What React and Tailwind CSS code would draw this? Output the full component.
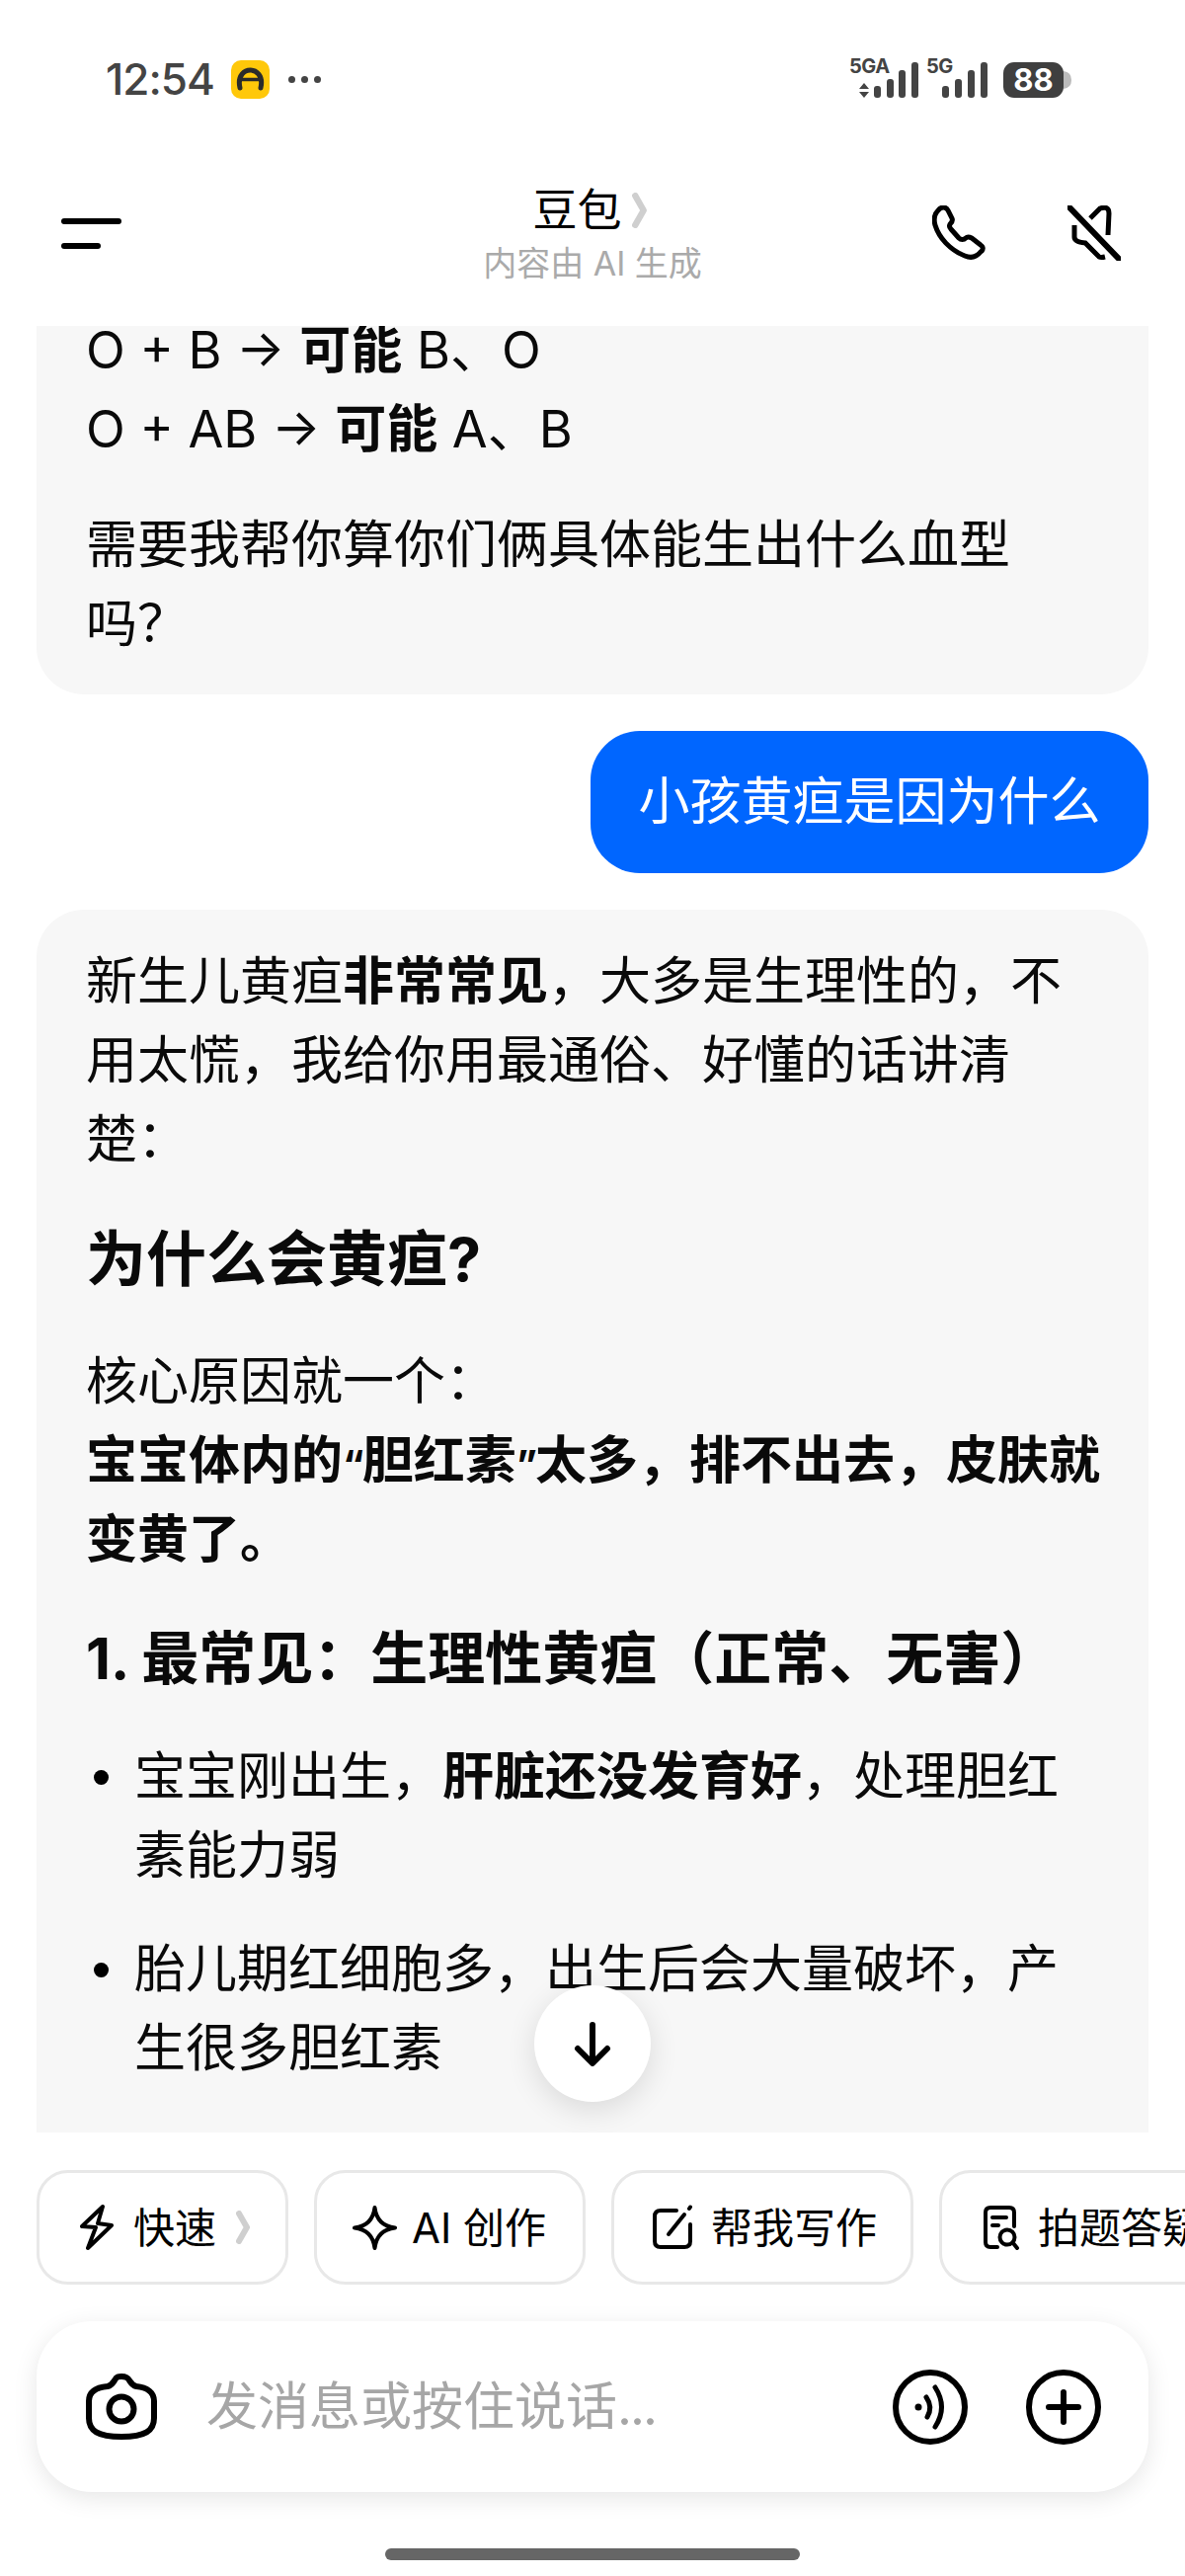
import React from 'react';

const FONT = 'font-["Inter","Noto_Sans_CJK_SC",sans-serif]';

function StatusIcons() {
  const bars = [
    [885, 87], [898, 80], [910, 71], [923, 63],
    [954, 87], [967, 80], [980, 71], [993, 63],
  ];
  return (
    <svg width="240" height="50" viewBox="855 55 240 50" className="mr-[105px]">
      <text x="860" y="74" fontSize="20" fontWeight="700" fill="#444" letterSpacing="-0.5" fontFamily="Inter">5GA</text>
      <text x="938" y="74" fontSize="20" fontWeight="700" fill="#444" letterSpacing="-0.5" fontFamily="Inter">5G</text>
      <path d="M875 84l5 6h-10zM875 99l5-6h-10z" fill="#444" />
      {bars.map(([x, y]) => (
        <rect key={x} x={x} y={y} width="7" height={99 - y} rx="3" fill="#444" />
      ))}
      <path d="M1077 72q8 1 8 9q0 8-8 9z" fill="#bbb" />
      <rect x="1016" y="63" width="61" height="36" rx="11" fill="#3f3f3f" />
      <text x="1046.5" y="92" fontSize="31" fontWeight="700" fill="#fff" textAnchor="middle" fontFamily="Inter">88</text>
    </svg>
  );
}

function AppBadge() {
  return (
    <svg width="39" height="39" viewBox="0 0 39 39">
      <rect width="39" height="39" rx="10" fill="#ffc80a" />
      <path d="M9 28C6 15 14 10 19.5 10C25 10 33 15 30 28" fill="none" stroke="#2b2b2b" strokeWidth="5" strokeLinecap="round" />
      <path d="M8 19.5H31" stroke="#2b2b2b" strokeWidth="3.5" />
    </svg>
  );
}

function Chevron({ w = 14, h = 34 }) {
  return (
    <svg width={w} height={h} viewBox="0 0 14 34" fill="none" stroke="#cfcfcf" strokeWidth="6" strokeLinecap="round" strokeLinejoin="round">
      <path d="M3 3L11 17L3 31" />
    </svg>
  );
}

function PhoneIcon() {
  return (
    <svg width="54" height="56" viewBox="0 0 54 56" fill="none" stroke="#000" strokeWidth="5" strokeLinejoin="round">
      <path d="M6 5C9 1 14 1 16 5L20 13C21 15 20 17 18 19C17 21 18 23 19 24L27 33C29 35 32 35 34 33C36 31 38 32 40 33L49 40C52 42 52 45 49 47C45 52 40 54 33 51C18 45 7 33 3 20C1 13 2 9 6 5Z" />
    </svg>
  );
}

function MuteIcon() {
  return (
    <svg width="54" height="56" viewBox="0 0 54 56" fill="none" stroke="#000" strokeWidth="5" strokeLinecap="round">
      <path d="M2 2L52 54" strokeWidth="6" />
      <path d="M23 13L33 3Q42 0 42 8L41 30" strokeLinecap="butt" />
      <path d="M7 20V32Q7 37 18 38L32 52Q34 53 38 52" strokeLinecap="butt" />
    </svg>
  );
}

function BoltIcon() {
  return (
    <svg width="34" height="46" viewBox="0 0 34 46" fill="none" stroke="#000" strokeWidth="4" strokeLinejoin="round">
      <path d="M23 2L2 22L16 23L8 44L32 21L18 19Z" />
    </svg>
  );
}

function StarIcon() {
  return (
    <svg width="45" height="45" viewBox="0 0 45 45" fill="none" stroke="#000" strokeWidth="4" strokeLinejoin="round">
      <path d="M22.5 2C24 14 30 21 43 22.5C30 24 24 31 22.5 43C21 31 15 24 2 22.5C15 21 21 14 22.5 2Z" />
    </svg>
  );
}

function PenIcon() {
  return (
    <svg width="44" height="46" viewBox="0 0 44 46" fill="none" stroke="#000" strokeWidth="4" strokeLinecap="round">
      <path d="M25 6H9Q3 6 3 12V37Q3 43 9 43H33Q39 43 39 37V20" />
      <path d="M17 30L33 10" />
      <path d="M38 4L39 2.5" />
    </svg>
  );
}

function DocSearchIcon() {
  return (
    <svg width="38" height="46" viewBox="0 0 38 46" fill="none" stroke="#000" strokeWidth="4" strokeLinecap="round">
      <path d="M32 22V8Q32 3 27 3H8Q3 3 3 8V38Q3 43 8 43H15" />
      <path d="M10 13H24" />
      <path d="M10 21H16" />
      <circle cx="25" cy="33" r="7.5" />
      <path d="M31 39L35 44" />
    </svg>
  );
}

function CameraIcon() {
  return (
    <svg width="72" height="67" viewBox="0 0 72 67" fill="none" stroke="#000" strokeWidth="6">
      <path d="M22 13C26 12 27 10 29 7C31 3 33 3 36 3C39 3 42 3 44 7C46 10 47 12 51 13C62 14 69 19 69 28V45C69 58 60 64 36 64C12 64 3 58 3 45V28C3 19 10 14 22 13Z" />
      <circle cx="36" cy="36" r="12.5" />
    </svg>
  );
}

function VoiceIcon() {
  return (
    <svg width="76" height="76" viewBox="0 0 76 76" fill="none" stroke="#000" strokeWidth="6" strokeLinecap="round">
      <circle cx="38" cy="38" r="35" />
      <circle cx="26" cy="38" r="3.5" fill="#000" stroke="none" />
      <path d="M34 28Q41 38 35 48" strokeWidth="5" />
      <path d="M43 18Q56 38 43 58" strokeWidth="5" />
    </svg>
  );
}

function PlusIcon() {
  return (
    <svg width="76" height="76" viewBox="0 0 76 76" fill="none" stroke="#000" strokeWidth="6" strokeLinecap="round">
      <circle cx="38" cy="38" r="35" />
      <path d="M23 38H53M38 23V53" />
    </svg>
  );
}

function Chip({ icon, label, width, gap = 'gap-[20px]', pad = 'pl-[40px]', trailing }) {
  return (
    <div className={`${width} ${gap} ${pad} h-[116px] shrink-0 flex items-center rounded-[32px] border-[3px] border-[#e8e8e8] bg-white text-[42px] text-black whitespace-nowrap`}>
      {icon}
      <span>{label}</span>
      {trailing}
    </div>
  );
}

export default function App() {
  return (
    <div lang="zh-CN" className={`${FONT} w-[1200px] h-[2608px] bg-white overflow-hidden flex flex-col text-[#0a0a0a]`}>
      {/* status bar */}
      <div className="h-[165px] flex justify-between items-start pt-[55px]">
        <div className="flex items-center pl-[107px] h-[50px]">
          <span className="text-[44px] font-medium text-[#444] tracking-[-1px]">12:54</span>
          <span className="ml-[17px]"><AppBadge /></span>
          <span className="ml-[19px] flex gap-[6px]">
            <i className="w-[7px] h-[7px] rounded-full bg-[#444]" />
            <i className="w-[7px] h-[7px] rounded-full bg-[#444]" />
            <i className="w-[7px] h-[7px] rounded-full bg-[#444]" />
          </span>
        </div>
        <StatusIcons />
      </div>

      {/* header */}
      <div className="h-[165px] grid grid-cols-[1fr_auto_1fr] items-start">
        <div className="pl-[62px] pt-[56px] flex flex-col gap-[19px]">
          <div className="w-[61px] h-[6px] rounded-full bg-black" />
          <div className="w-[40px] h-[6px] rounded-full bg-black" />
        </div>
        <div className="flex flex-col items-center pt-[20px]">
          <div className="flex items-center gap-[10px] h-[56px] text-[45px] text-black -ml-[6px]">
            豆包
            <Chevron w={15} h={36} />
          </div>
          <div className="text-[34px] text-[#aaa] leading-[50px] mt-[1px] whitespace-nowrap">内容由 AI 生成</div>
        </div>
        <div className="flex justify-end pr-[65px] pt-[43px] gap-[83px]">
          <PhoneIcon />
          <MuteIcon />
        </div>
      </div>

      {/* chat */}
      <div className="relative h-[1829px] overflow-hidden">
        <div className="-mt-[47px] px-[37px] text-[52px] leading-[80px]">
          <div className="bg-[#f7f7f7] rounded-[48px] pt-[32px] pb-[31px] pl-[50px] pr-[46px]">
            <p>O + B → <b className="font-bold">可能</b> B、O</p>
            <p>O + AB → <b className="font-bold">可能</b> A、B</p>
            <p className="mt-[37px]">需要我帮你算你们俩具体能生出什么血型吗？</p>
          </div>

          <div className="flex justify-end mt-[37px]">
            <div className="w-[565px] h-[144px] flex items-center justify-center rounded-[50px] bg-[#0066ff] text-white">小孩黄疸是因为什么</div>
          </div>

          <div className="mt-[37px] bg-[#f7f7f7] rounded-t-[48px] pt-[33px] pl-[50px] pr-[46px] h-[1300px]">
            <p>新生儿黄疸<b className="font-bold">非常常见</b>，大多是生理性的，不用太慌，我给你用最通俗、好懂的话讲清楚：</p>
            <h2 className="mt-[36px] text-[61px] leading-[90px] font-bold">为什么会黄疸?</h2>
            <p className="mt-[39px]">核心原因就一个：</p>
            <p className="font-bold">宝宝体内的<span className="text-[40px] leading-none tracking-[-2px]">“</span>胆红素<span className="text-[40px] leading-none tracking-[-2px]">”</span>太多，排不出去，皮肤就变黄了。</p>
            <h3 className="mt-[35px] text-[58px] leading-[90px] font-bold whitespace-nowrap">1. 最常见：生理性黄疸（正常、无害）</h3>
            <ul className="mt-[35px] flex flex-col gap-[35px]">
              <li className="relative pl-[49px]">
                <i className="absolute left-[8px] top-[33px] w-[15px] h-[15px] rounded-full bg-black" />
                宝宝刚出生，<b className="font-bold">肝脏还没发育好</b>，处理胆红素能力弱
              </li>
              <li className="relative pl-[49px]">
                <i className="absolute left-[8px] top-[33px] w-[15px] h-[15px] rounded-full bg-black" />
                胎儿期红细胞多，出生后会大量破坏，产生很多胆红素
              </li>
            </ul>
          </div>
        </div>

        <div className="absolute left-[541px] top-[1680px] w-[118px] h-[118px] rounded-full bg-white shadow-[0_8px_30px_rgba(0,0,0,0.12)] flex items-center justify-center">
          <svg width="40" height="45" viewBox="0 0 40 45" fill="none" stroke="#000" strokeWidth="6" strokeLinecap="round" strokeLinejoin="round">
            <path d="M20 3V41M5 27L20 42L35 27" />
          </svg>
        </div>
      </div>

      {/* quick actions */}
      <div className="mt-[38px] pl-[37px] flex gap-[26px] overflow-hidden">
        <Chip width="w-[255px]" icon={<BoltIcon />} label="快速" pad="pl-[41px]" gap="gap-[20px]" trailing={<Chevron />} />
        <Chip width="w-[275px]" icon={<StarIcon />} label="AI 创作" pad="pl-[36px]" gap="gap-[15px]" />
        <Chip width="w-[306px]" icon={<PenIcon />} label="帮我写作" pad="pl-[38px]" gap="gap-[16px]" />
        <Chip width="w-[320px]" icon={<DocSearchIcon />} label="拍题答疑" pad="pl-[41px]" gap="gap-[18px]" />
      </div>

      {/* input */}
      <div className="mx-[37px] mt-[37px] h-[173px] rounded-[56px] bg-white shadow-[0_6px_24px_rgba(0,0,0,0.1)] flex items-center pl-[50px] pr-[48px]">
        <CameraIcon />
        <span className="ml-[50px] text-[52px] text-[#a6a6a6]">发消息或按住说话<span className="tracking-[-2px]">...</span></span>
        <div className="ml-auto flex gap-[59px]">
          <VoiceIcon />
          <PlusIcon />
        </div>
      </div>

      {/* home indicator */}
      <div className="mt-[57px] mx-auto w-[420px] h-[12px] rounded-full bg-[#666]" />
    </div>
  );
}
